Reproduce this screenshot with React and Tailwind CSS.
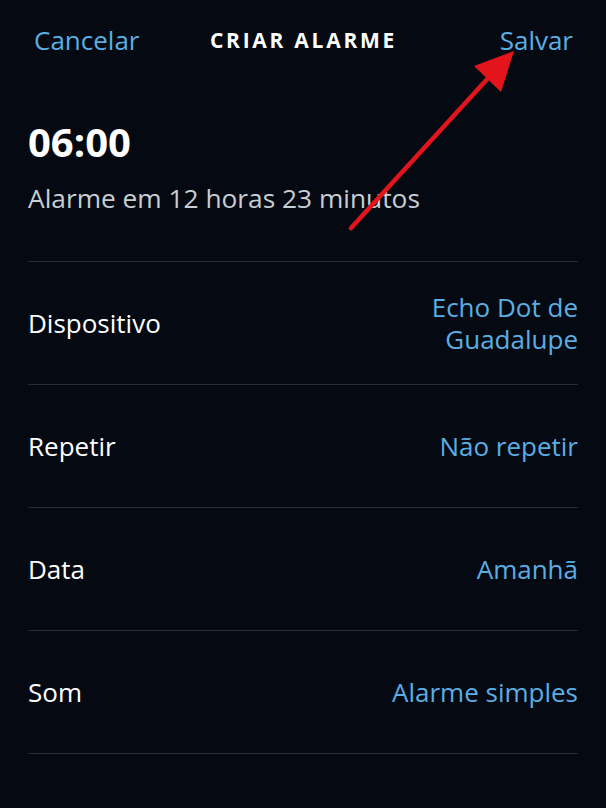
export default function App() {
  const rows = [
    { label: "Dispositivo", value: "Echo Dot de Guadalupe" },
    { label: "Repetir", value: "Não repetir" },
    { label: "Data", value: "Amanhã" },
    { label: "Som", value: "Alarme simples" },
  ];
  return (
    <div
      className="relative min-h-screen w-full bg-[#050a12] text-white"
      style={{ fontFamily: '"Open Sans", "Noto Sans", sans-serif' }}
    >
      <header className="grid h-[80px] grid-cols-[1fr_auto_1fr] items-center pl-[34px] pr-[33px]">
        <span className="justify-self-start text-[26px] leading-none text-[#5aaee3]">Cancelar</span>
        <span className="text-[21px] font-bold uppercase leading-none tracking-[0.13em] text-white">
          Criar alarme
        </span>
        <span className="justify-self-end text-[26px] leading-none text-[#5aaee3]">Salvar</span>
      </header>

      <section className="px-[28px]">
        <div className="mt-[42px] text-[40px] font-bold leading-[40px] text-white">06:00</div>
        <div className="mt-[20px] text-[26.3px] leading-[32px] text-[#c9ced3]">Alarme em 12 horas 23 minutos</div>

        <ul className="mt-[47px] border-t border-[#262d35]">
          {rows.map((r) => (
            <li
              key={r.label}
              className="flex h-[123px] items-center justify-between border-b border-[#262d35]"
            >
              <span className="text-[26px] leading-[32px] text-white">{r.label}</span>
              <span className="max-w-[200px] text-right text-[26px] leading-[32px] text-[#5aaee3]">
                {r.value}
              </span>
            </li>
          ))}
        </ul>
      </section>

      <svg
        className="pointer-events-none absolute left-0 top-0"
        width="606"
        height="808"
        viewBox="0 0 606 808"
      >
        <line x1="351" y1="228" x2="490" y2="76" stroke="#e3141b" strokeWidth="4.5" strokeLinecap="round" />
        <polygon points="514,51 474,66 501,92" fill="#e3141b" />
      </svg>
    </div>
  );
}
